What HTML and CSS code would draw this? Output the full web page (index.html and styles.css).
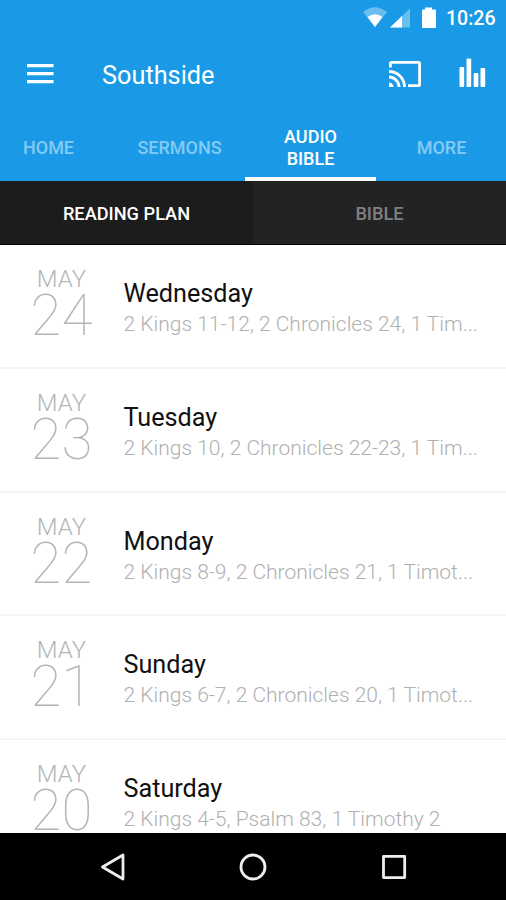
FILE: index.html
```html
<!DOCTYPE html>
<html lang="en">
<head>
    <meta charset="UTF-8">
    <meta name="viewport" content="width=device-width, initial-scale=1.0">
    <title>Southside</title>
    <link rel="stylesheet" href="styles.css">
</head>
<body>

    <header class="header">
        <div class="status-bar">
            <svg class="status-icons" width="80" height="37" viewBox="0 0 80 37">
                <path d="M3 12Q15 2.500 27 12L15 27Z" fill="#fff" opacity=".35"/>
                <path d="M7.500 17Q15 11.500 22.500 17L15 27Z" fill="#fff"/>
                <path d="M50 8.500V27.500H30Z" fill="#fff" opacity=".35"/>
                <path d="M42 16V27.500H30Z" fill="#fff"/>
                <path d="M65 7.500h7V9.500h3q1 0 1 1V27q0 1-1 1H63q-1 0-1-1V10.500q0-1 1-1h2Z" fill="#fff"/>
            </svg>
            <span class="clock">10:26</span>
        </div>

        <div class="toolbar">
            <svg class="menu" width="27" height="20" viewBox="0 0 27 20" fill="#fff">
                <path d="M0 0h26.500v3.300H0ZM0 8h26.500v3.300H0ZM0 16h26.500v3.300H0Z"/>
            </svg>
            <h1 class="title">Southside</h1>
            <svg class="cast" width="34" height="28" viewBox="0 0 34 28" fill="none" stroke="#fff" stroke-width="2.800">
                <path d="M2.400 7.500V3.500Q2.400 2.400 3.500 2.400H30.500Q31.600 2.400 31.600 3.500V24.500Q31.600 25.600 30.500 25.600H20"/>
                <path d="M1 11.500A15.500 15.500 0 0 1 16.500 27M1 17A10 10 0 0 1 11 27"/>
                <path d="M1 22.500A4.500 4.500 0 0 1 5.500 27H1Z" fill="#fff" stroke="none"/>
            </svg>
            <svg class="bars" width="28" height="30" viewBox="0 0 28 30" fill="#fff">
                <rect x="0.500" y="9" width="4.700" height="20" rx="1"/>
                <rect x="7.500" y="0.500" width="4.700" height="28.500" rx="1"/>
                <rect x="14.700" y="15" width="4.700" height="14" rx="1"/>
                <rect x="21.500" y="10" width="4.700" height="19" rx="1"/>
            </svg>
        </div>

        <nav class="tabs">
            <div class="tab">HOME</div>
            <div class="tab">SERMONS</div>
            <div class="tab active">AUDIO<br>BIBLE</div>
            <div class="tab">MORE</div>
        </nav>
    </header>

    <nav class="subtabs">
        <div class="subtab selected">READING PLAN</div>
        <div class="subtab">BIBLE</div>
    </nav>

    <main class="list">
        <div class="row">
            <div class="date"><span class="month">MAY</span><span class="day">24</span></div>
            <div class="info">
                <div class="name">Wednesday</div>
                <div class="reading">2 Kings 11-12, 2 Chronicles 24, 1 Tim...</div>
            </div>
        </div>
        <div class="row">
            <div class="date"><span class="month">MAY</span><span class="day">23</span></div>
            <div class="info">
                <div class="name">Tuesday</div>
                <div class="reading">2 Kings 10, 2 Chronicles 22-23, 1 Tim...</div>
            </div>
        </div>
        <div class="row">
            <div class="date"><span class="month">MAY</span><span class="day">22</span></div>
            <div class="info">
                <div class="name">Monday</div>
                <div class="reading">2 Kings 8-9, 2 Chronicles 21, 1 Timot...</div>
            </div>
        </div>
        <div class="row">
            <div class="date"><span class="month">MAY</span><span class="day">21</span></div>
            <div class="info">
                <div class="name">Sunday</div>
                <div class="reading">2 Kings 6-7, 2 Chronicles 20, 1 Timot...</div>
            </div>
        </div>
        <div class="row">
            <div class="date"><span class="month">MAY</span><span class="day">20</span></div>
            <div class="info">
                <div class="name">Saturday</div>
                <div class="reading">2 Kings 4-5, Psalm 83, 1 Timothy 2</div>
            </div>
        </div>
    </main>

    <footer class="navbar">
        <svg width="28" height="30" viewBox="0 0 28 30" fill="none" stroke="#eee" stroke-width="2.800" stroke-linejoin="round">
            <path d="M3.500 15L24 3V27Z"/>
        </svg>
        <svg width="28" height="30" viewBox="0 0 28 30" fill="none" stroke="#eee" stroke-width="2.800">
            <circle cx="14" cy="15" r="12"/>
        </svg>
        <svg width="28" height="30" viewBox="0 0 28 30" fill="none" stroke="#eee" stroke-width="2.800" stroke-linejoin="round">
            <rect x="4.500" y="4.400" width="21.200" height="21.200"/>
        </svg>
    </footer>

</body>
</html>
```

FILE: styles.css
```css
* {
    box-sizing: border-box;
}
body {
    margin: 0;
    height: 900px;
    display: flex;
    flex-direction: column;
    overflow: hidden;
    font-family: Roboto, sans-serif;
    background-color: #fff;
}
svg {
    display: block;
    flex: none;
}
.header {
    height: 181px;
    flex: none;
    background-color: #1a9ae6;
    color: #fff;
}
.status-bar {
    height: 37px;
    display: flex;
    justify-content: flex-end;
    align-items: center;
    padding-right: 11px;
}
.status-icons {
    margin-right: 6px;
}
.clock {
    width: 49px;
    font-size: 19.5px;
    font-weight: 500;
    white-space: nowrap;
}
.toolbar {
    height: 75px;
    display: flex;
    align-items: center;
    padding: 0 19px 0 27px;
}
.menu {
    margin-bottom: 2px;
}
.title {
    margin: 0 auto 0 48px;
    padding-top: 2px;
    font-size: 25.3px;
    font-weight: 400;
}
.cast {
    margin-bottom: 2px;
}
.bars {
    margin: 0 0 4px 37px;
}
.tabs {
    height: 69px;
    display: flex;
    margin-left: -17px;
}
.tab {
    width: 131px;
    flex: none;
    display: flex;
    align-items: center;
    justify-content: center;
    padding-top: 7px;
    border-bottom: 4px solid transparent;
    text-align: center;
    font-size: 18px;
    line-height: 22px;
    font-weight: 500;
    color: #83caf5;
}
.tab.active {
    color: #fff;
    border-bottom-color: #fff;
}
.subtabs {
    height: 64px;
    flex: none;
    display: flex;
    border-bottom: 1px solid #000;
    background-color: #232323;
}
.subtab {
    flex: 1;
    display: flex;
    align-items: center;
    justify-content: center;
    padding-top: 2px;
    font-size: 18.2px;
    font-weight: 500;
    color: #808080;
}
.subtab.selected {
    background-color: #1c1c1c;
    color: #fff;
}
.list {
    flex: 1;
    min-height: 0;
    overflow: hidden;
}
.row {
    height: 123.8px;
    display: flex;
    border-bottom: 2px solid #f6f6f6;
}
.date {
    width: 123px;
    flex: none;
    display: flex;
    flex-direction: column;
    align-items: center;
    padding-top: 20px;
    color: #b3b6b7;
}
.month {
    font-size: 24px;
    line-height: 28px;
    font-weight: 300;
}
.day {
    font-size: 56.5px;
    line-height: 46px;
    font-weight: 100;
}
.info {
    padding: 33px 0 0 0.5px;
}
.name {
    font-size: 25.2px;
    line-height: 32px;
    color: #111;
}
.reading {
    font-size: 21px;
    line-height: 28px;
    font-weight: 300;
    color: #b0b0b0;
    white-space: nowrap;
}
.navbar {
    height: 67px;
    flex: none;
    display: flex;
    justify-content: center;
    align-items: center;
    gap: 112px;
    background-color: #000;
}
```
